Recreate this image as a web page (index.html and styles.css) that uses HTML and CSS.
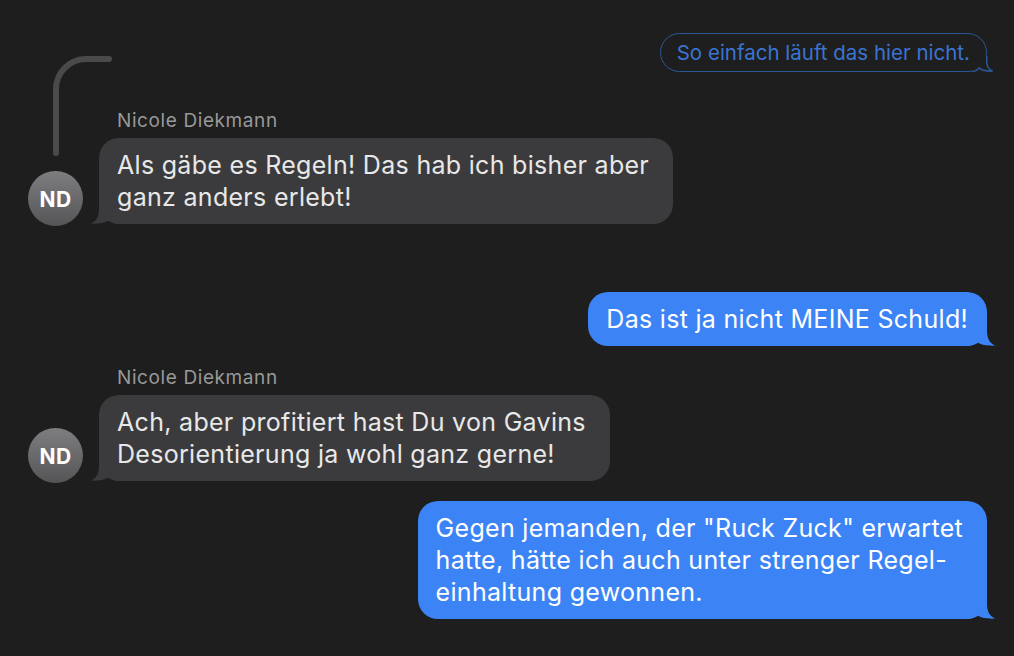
FILE: index.html
```html
<!DOCTYPE html>
<html lang="de">
<head>
<meta charset="utf-8">
<title>Nachrichten</title>
<link rel="stylesheet" href="styles.css">
</head>
<body>
<main class="chat">
  <svg class="thread-line" width="120" height="160" viewBox="0 0 120 160" aria-hidden="true">
    <path d="M56 153 L56 89 A30 30 0 0 1 86 59 L109 59" fill="none" stroke="#4a4a4b" stroke-width="6" stroke-linecap="round"/>
  </svg>

  <div class="row out first">
    <div class="bubble outline">So einfach läuft das hier nicht.<svg class="tail tail-outline" viewBox="0 0 30 22" aria-hidden="true"><path d="M0 22 C5 22 8 20.5 10 17 C14 21 21 22 29.5 21.6 C24 19.5 21 15 21 7 L21 0 L0 0 Z" fill="#1e1e1e"/><path d="M0 22 C5 22 8 20.5 10 17 C14 21 21 22 29.5 21.6 C24 19.5 21 15 21 7 L21 0" fill="none" stroke="#2b5895" stroke-width="2.1"/></svg></div>
  </div>

  <div class="row in in-first">
    <div class="avatar">ND</div>
    <div class="msg">
      <div class="name">Nicole Diekmann</div>
      <div class="bubble gray multi">Als gäbe es Regeln! Das hab ich bisher aber<br>ganz anders erlebt!<svg class="tail tail-left" viewBox="0 0 30 22" aria-hidden="true"><path d="M0 22 C5 22 8 20.5 10 17 C14 21 21 22 29.5 21.6 C24 19.5 21 15 21 7 L21 0 L0 0 Z"/></svg></div>
    </div>
  </div>

  <div class="row out gap-lg">
    <div class="bubble blue">Das ist ja nicht MEINE Schuld!<svg class="tail tail-right" viewBox="0 0 30 22" aria-hidden="true"><path d="M0 22 C5 22 8 20.5 10 17 C14 21 21 22 29.5 21.6 C24 19.5 21 15 21 7 L21 0 L0 0 Z"/></svg></div>
  </div>

  <div class="row in gap-md">
    <div class="avatar">ND</div>
    <div class="msg">
      <div class="name">Nicole Diekmann</div>
      <div class="bubble gray multi">Ach, aber profitiert hast Du von Gavins<br>Desorientierung ja wohl ganz gerne!<svg class="tail tail-left" viewBox="0 0 30 22" aria-hidden="true"><path d="M0 22 C5 22 8 20.5 10 17 C14 21 21 22 29.5 21.6 C24 19.5 21 15 21 7 L21 0 L0 0 Z"/></svg></div>
    </div>
  </div>

  <div class="row out gap-sm">
    <div class="bubble blue multi">Gegen jemanden, der "Ruck Zuck" erwartet<br>hatte, hätte ich auch unter strenger Regel-<br>einhaltung gewonnen.<svg class="tail tail-right" viewBox="0 0 30 22" aria-hidden="true"><path d="M0 22 C5 22 8 20.5 10 17 C14 21 21 22 29.5 21.6 C24 19.5 21 15 21 7 L21 0 L0 0 Z"/></svg></div>
  </div>
</main>
</body>
</html>
```

FILE: styles.css
```css
html, body {
  margin: 0;
  background: #1e1e1e;
}

body {
  font-family: Inter, "Noto Sans", "Liberation Sans", sans-serif;
  -webkit-font-smoothing: antialiased;
}

.chat {
  position: relative;
  display: flex;
  flex-direction: column;
  padding: 33px 27px 0 28px;
}

.thread-line {
  position: absolute;
  left: 0;
  top: 0;
}

.row {
  display: flex;
}

.row.out {
  justify-content: flex-end;
}

.row.in {
  align-items: flex-end;
  margin-top: 38px;
}

.row.in.gap-md {
  margin-top: 21px;
}

.row.out.gap-lg {
  margin-top: 68px;
}

.row.out.gap-sm {
  margin-top: 20px;
}

.avatar {
  flex: none;
  width: 55px;
  height: 55px;
  border-radius: 50%;
  margin-right: 16px;
  margin-bottom: -2px;
  background: linear-gradient(180deg, #7e7e80 0%, #555557 100%);
  color: #fff;
  font-weight: 700;
  font-size: 21px;
  display: flex;
  align-items: center;
  justify-content: center;
  letter-spacing: 0.3px;
  padding-top: 2px;
  box-sizing: border-box;
}

.msg {
  display: flex;
  flex-direction: column;
  align-items: flex-start;
}

.name {
  font-size: 19px;
  line-height: 22px;
  color: #999999;
  padding-left: 18px;
  margin-bottom: 6px;
  letter-spacing: 0.6px;
}

.bubble {
  position: relative;
  z-index: 0;
  box-sizing: border-box;
  white-space: nowrap;
  border-radius: 20px;
  padding: 11px 19px 11px 18px;
  font-size: 25px;
  line-height: 32px;
  letter-spacing: 0.3px;
}

.bubble.multi {
  padding-right: 24px;
}

.bubble.gray {
  background: #3b3b3d;
  color: #e8e8e8;
}

.bubble.blue {
  background: #3c84f6;
  color: #fff;
}

.bubble.outline {
  border: 1.5px solid #2b5895;
  color: #3a74d2;
  font-size: 20.5px;
  line-height: 24px;
  letter-spacing: 0;
  padding: 6.5px 16px;
}

.tail {
  position: absolute;
  z-index: -1;
  bottom: 0;
  width: 30px;
  height: 22px;
}

.tail-right {
  right: -9px;
  fill: #3c84f6;
}

.tail-left {
  left: -9px;
  fill: #3b3b3d;
  transform: scaleX(-1);
}

.tail-outline {
  width: 21px;
  height: 15.4px;
  right: -7px;
  bottom: -0.8px;
}
```
